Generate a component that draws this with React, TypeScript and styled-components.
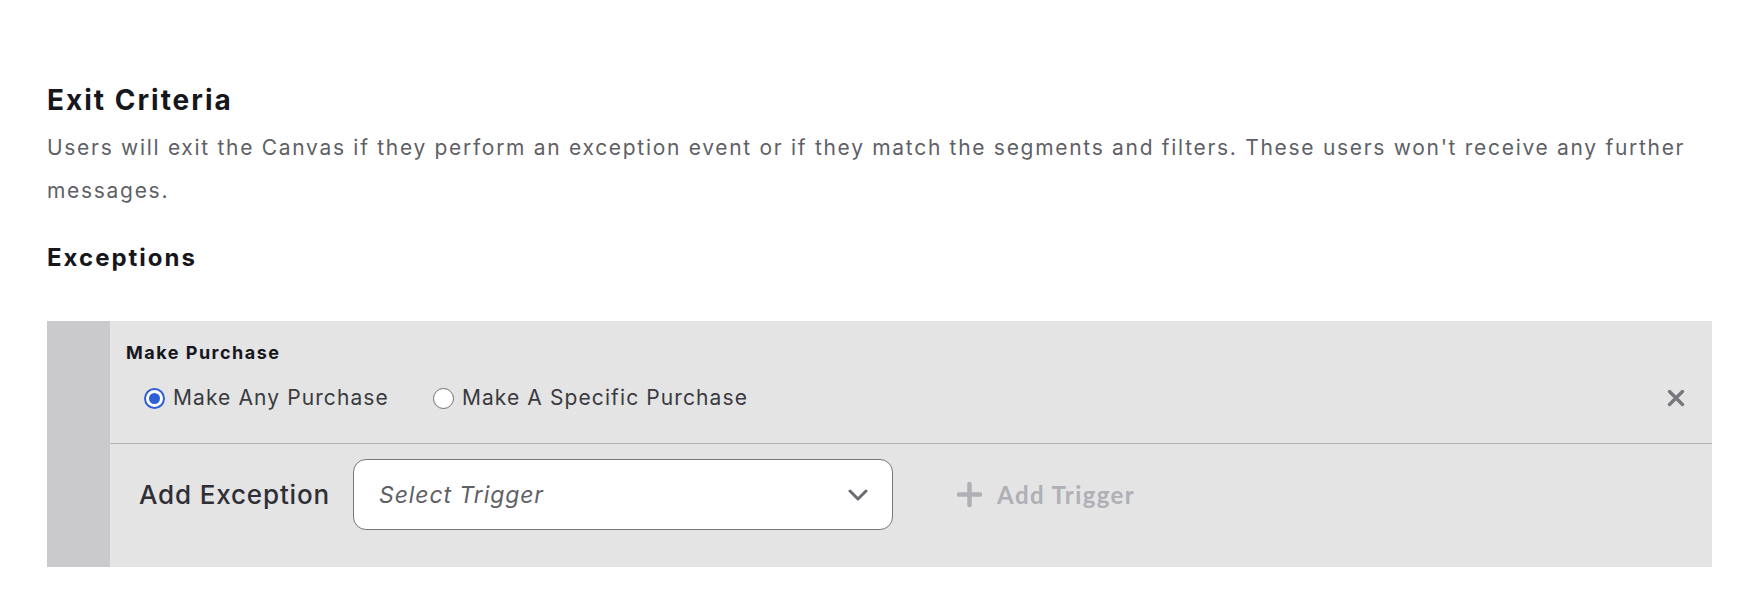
import React, { useState } from 'react'
import styled, { createGlobalStyle } from 'styled-components'

const GlobalStyle = createGlobalStyle`
    body {
        margin: 0;
        background: #ffffff;
        font-family: Inter, "Noto Sans", sans-serif;
        color: #16161d;
    }
`

const Page = styled.div`
    padding: 83px 52px 40px 47px;
`

const Title = styled.h2`
    margin: 0;
    font-size: 28px;
    line-height: 34px;
    font-weight: 700;
    letter-spacing: 2px;
    color: #16161d;
`

const Description = styled.p`
    margin: 9px 0 0;
    font-size: 21px;
    line-height: 43px;
    letter-spacing: 1.7px;
    color: #5f5f66;
`

const SubTitle = styled.h3`
    margin: 31px 0 0;
    font-size: 24px;
    line-height: 30px;
    font-weight: 700;
    letter-spacing: 2px;
    color: #16161d;
`

const Card = styled.div`
    display: flex;
    margin-top: 48px;
    background: #e4e4e5;
`

const Stripe = styled.div`
    width: 63px;
    flex-shrink: 0;
    background: #cacacd;
`

const CardBody = styled.div`
    flex: 1;
    display: flex;
    flex-direction: column;
`

const TriggerRow = styled.div`
    padding: 21px 27px 32px 16px;
    border-bottom: 1px solid #b2b2b8;
`

const TriggerName = styled.div`
    font-size: 18px;
    line-height: 22px;
    font-weight: 700;
    letter-spacing: 1.5px;
    color: #16161d;
`

const RadioRow = styled.div`
    display: flex;
    align-items: center;
    margin-top: 21px;
    padding-left: 18px;
`

const RadioOption = styled.label`
    display: flex;
    align-items: center;
    gap: 8px;
    margin-right: 44px;
    font-size: 21px;
    line-height: 26px;
    letter-spacing: 1.1px;
    color: #3a3a40;
    cursor: pointer;
`

const RadioDot = styled.span<{ $checked: boolean }>`
    width: 21px;
    height: 21px;
    box-sizing: border-box;
    border-radius: 50%;
    background: #ffffff;
    border: ${(p) => (p.$checked ? '2px solid #2e5fd6' : '1.5px solid #707075')};
    display: flex;
    align-items: center;
    justify-content: center;

    &::after {
        content: '';
        display: ${(p) => (p.$checked ? 'block' : 'none')};
        width: 11px;
        height: 11px;
        border-radius: 50%;
        background: #2e5fd6;
    }
`

const CloseButton = styled.button`
    margin-left: auto;
    padding: 0;
    border: none;
    background: none;
    display: flex;
    cursor: pointer;
`

const AddRow = styled.div`
    display: flex;
    align-items: center;
    padding: 15px 0 37px 29px;
`

const AddLabel = styled.div`
    font-size: 26px;
    line-height: 32px;
    font-weight: 500;
    letter-spacing: 0.85px;
    color: #2f2f35;
    margin-right: 23px;
`

const Select = styled.div`
    width: 540px;
    height: 71px;
    box-sizing: border-box;
    border: 1px solid #77777c;
    border-radius: 13px;
    background: #ffffff;
    display: flex;
    align-items: center;
    justify-content: space-between;
    padding: 0 24px 0 25px;
`

const Placeholder = styled.span`
    font-size: 23px;
    font-style: italic;
    letter-spacing: 0.9px;
    color: #606067;
`

const AddTrigger = styled.button`
    margin-left: 64px;
    padding: 0;
    border: none;
    background: none;
    display: flex;
    align-items: center;
    gap: 15px;
    font-family: Lato, "Liberation Sans", sans-serif;
    font-size: 24px;
    font-weight: 700;
    letter-spacing: 1.4px;
    color: #afafb5;
    cursor: pointer;
`

const options = ['Make Any Purchase', 'Make A Specific Purchase']

export default function App() {
    const [selected, setSelected] = useState(0)

    return (
        <>
            <GlobalStyle />
            <Page>
                <Title>Exit Criteria</Title>
                <Description>
                    Users will exit the Canvas if they perform an exception event or if they match the segments and filters. These users won't receive any further messages.
                </Description>
                <SubTitle>Exceptions</SubTitle>
                <Card>
                    <Stripe />
                    <CardBody>
                        <TriggerRow>
                            <TriggerName>Make Purchase</TriggerName>
                            <RadioRow>
                                {options.map((value, key) => (
                                    <RadioOption key={key} onClick={() => setSelected(key)}>
                                        <RadioDot $checked={selected === key} />
                                        {value}
                                    </RadioOption>
                                ))}
                                <CloseButton aria-label="Remove">
                                    <svg width="18" height="18" viewBox="0 0 18 18">
                                        <path d="M2.5 2.5 L15.5 15.5 M15.5 2.5 L2.5 15.5" stroke="#77777c" strokeWidth="3.4" strokeLinecap="round" />
                                    </svg>
                                </CloseButton>
                            </RadioRow>
                        </TriggerRow>
                        <AddRow>
                            <AddLabel>Add Exception</AddLabel>
                            <Select>
                                <Placeholder>Select Trigger</Placeholder>
                                <svg width="20" height="12" viewBox="0 0 20 12">
                                    <path d="M2 2 L10 10 L18 2" fill="none" stroke="#6c6c72" strokeWidth="3" strokeLinecap="round" strokeLinejoin="round" />
                                </svg>
                            </Select>
                            <AddTrigger>
                                <svg width="25" height="25" viewBox="0 0 25 25">
                                    <path d="M12.5 2 V23 M2 12.5 H23" stroke="#afafb5" strokeWidth="4.5" strokeLinecap="round" />
                                </svg>
                                Add Trigger
                            </AddTrigger>
                        </AddRow>
                    </CardBody>
                </Card>
            </Page>
        </>
    )
}
